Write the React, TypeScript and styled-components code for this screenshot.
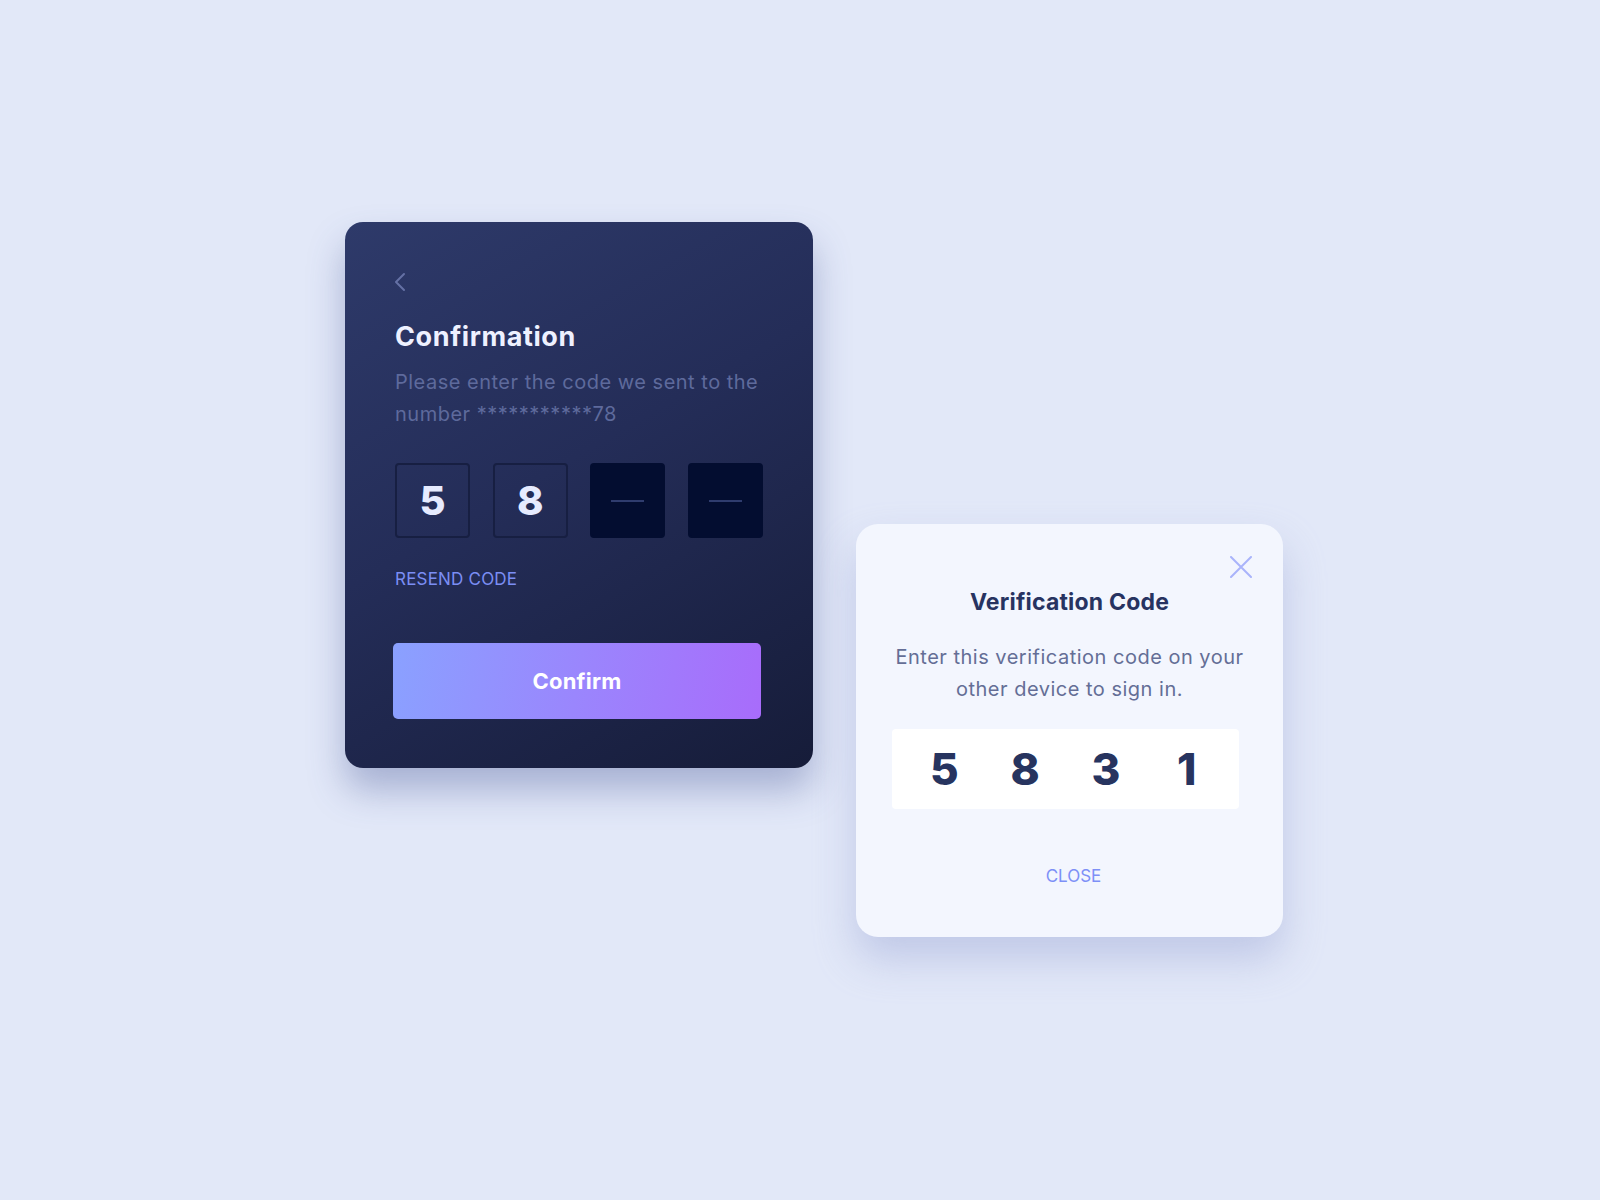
import styled, { createGlobalStyle } from "styled-components";

const GlobalStyle = createGlobalStyle`
  html, body {
    margin: 0;
    padding: 0;
    background: #e2e8f8;
  }
  * {
    box-sizing: border-box;
  }
`;

const Page = styled.main`
  width: 1600px;
  height: 1200px;
  display: flex;
  flex-direction: row;
  align-items: flex-start;
  gap: 43px;
  padding: 222px 0 0 345px;
  background: #e2e8f8;
  font-family: Inter, "Noto Sans", sans-serif;
`;

const DarkCard = styled.section`
  width: 468px;
  height: 546px;
  border-radius: 18px;
  padding: 50px 50px 49px 50px;
  display: flex;
  flex-direction: column;
  background: linear-gradient(150deg, #2e3a6a 0%, #242d58 45%, #161c39 100%);
  box-shadow: 0 22px 36px rgba(70, 86, 150, 0.38);
`;

const BackButton = styled.button`
  width: 14px;
  height: 20px;
  margin-left: -2px;
  padding: 0;
  border: none;
  background: none;
  display: flex;
  align-items: center;
  justify-content: center;
  cursor: pointer;
`;

const Title = styled.h1`
  margin: 28px 0 0;
  font-size: 27px;
  line-height: 34px;
  font-weight: 700;
  color: #eef1ff;
  letter-spacing: 0.6px;
`;

const Subtitle = styled.p`
  margin: 12px 0 0;
  font-size: 20px;
  line-height: 32px;
  font-weight: 400;
  color: #5e6a9c;
  letter-spacing: 0.5px;
`;

const CodeRow = styled.div`
  display: grid;
  grid-template-columns: repeat(4, 75px);
  justify-content: space-between;
  margin-top: 33px;
`;

const DigitBox = styled.div<{ $empty?: boolean }>`
  height: 75px;
  border-radius: 4px;
  display: flex;
  align-items: center;
  justify-content: center;
  font-size: 40px;
  font-weight: 800;
  color: #e6ebff;
  background: ${(p) => (p.$empty ? "#030d30" : "transparent")};
  border: 2px solid ${(p) => (p.$empty ? "#030d30" : "#171f42")};
`;

const Dash = styled.span`
  width: 33px;
  height: 2px;
  background: #2f3c6e;
`;

const Resend = styled.a`
  margin-top: 30px;
  font-size: 17px;
  line-height: 22px;
  font-weight: 400;
  color: #7b8ef4;
  letter-spacing: 0.2px;
  cursor: pointer;
`;

const ConfirmButton = styled.button`
  margin-top: auto;
  margin-left: -2px;
  width: 368px;
  height: 76px;
  border: none;
  border-radius: 5px;
  background: linear-gradient(100deg, #8aa1ff 0%, #9a86fd 50%, #a86cfb 100%);
  color: #ffffff;
  font-family: inherit;
  font-size: 22px;
  font-weight: 700;
  letter-spacing: 0.2px;
  cursor: pointer;
`;

const LightCard = styled.section`
  position: relative;
  margin-top: 302px;
  width: 427px;
  height: 413px;
  border-radius: 22px;
  padding: 64px 44px 0 36px;
  display: flex;
  flex-direction: column;
  align-items: center;
  background: #f3f6fe;
  box-shadow: 0 22px 40px rgba(150, 162, 210, 0.45);
`;

const CloseIcon = styled.button`
  position: absolute;
  top: 32px;
  right: 31px;
  width: 22px;
  height: 22px;
  padding: 0;
  border: none;
  background: none;
  cursor: pointer;
`;

const ModalTitle = styled.h2`
  margin: 0 0 0 8px;
  font-size: 23px;
  line-height: 28px;
  font-weight: 700;
  color: #273361;
  text-align: center;
  letter-spacing: 0.2px;
`;

const ModalText = styled.p`
  margin: 25px -20px 0 -12px;
  font-size: 20px;
  line-height: 32px;
  font-weight: 400;
  color: #646e96;
  text-align: center;
  letter-spacing: 0.5px;
  white-space: nowrap;
`;

const CodeStrip = styled.div`
  margin-top: 24px;
  width: 347px;
  height: 80px;
  border-radius: 4px;
  background: #ffffff;
  padding: 0 12px;
  display: grid;
  grid-template-columns: repeat(4, 1fr);
  align-items: center;
`;

const StripDigit = styled.span`
  text-align: center;
  font-size: 44px;
  font-weight: 800;
  color: #27345f;
`;

const CloseLink = styled.a`
  margin: 56px 0 0 16px;
  font-size: 17px;
  line-height: 22px;
  font-weight: 400;
  color: #7d90f7;
  cursor: pointer;
`;

const entered = ["5", "8", "", ""];
const issued = ["5", "8", "3", "1"];

export default function App() {
  return (
    <>
      <GlobalStyle />
      <Page>
        <DarkCard>
          <BackButton aria-label="Back">
            <svg width="12" height="20" viewBox="0 0 12 20" fill="none">
              <path
                d="M10 2L2 10L10 18"
                stroke="#6571a5"
                strokeWidth="2"
                strokeLinecap="round"
                strokeLinejoin="round"
              />
            </svg>
          </BackButton>
          <Title>Confirmation</Title>
          <Subtitle>
            Please enter the code we sent to the number ***********78
          </Subtitle>
          <CodeRow>
            {entered.map((d, i) => (
              <DigitBox key={i} $empty={!d}>
                {d || <Dash />}
              </DigitBox>
            ))}
          </CodeRow>
          <Resend>RESEND CODE</Resend>
          <ConfirmButton>Confirm</ConfirmButton>
        </DarkCard>

        <LightCard>
          <CloseIcon aria-label="Close">
            <svg width="22" height="22" viewBox="0 0 22 22" fill="none">
              <path
                d="M1 1L21 21M21 1L1 21"
                stroke="#a9b4fb"
                strokeWidth="2"
                strokeLinecap="round"
              />
            </svg>
          </CloseIcon>
          <ModalTitle>Verification Code</ModalTitle>
          <ModalText>
            Enter this verification code on your
            <br />
            other device to sign in.
          </ModalText>
          <CodeStrip>
            {issued.map((d, i) => (
              <StripDigit key={i}>{d}</StripDigit>
            ))}
          </CodeStrip>
          <CloseLink>CLOSE</CloseLink>
        </LightCard>
      </Page>
    </>
  );
}
